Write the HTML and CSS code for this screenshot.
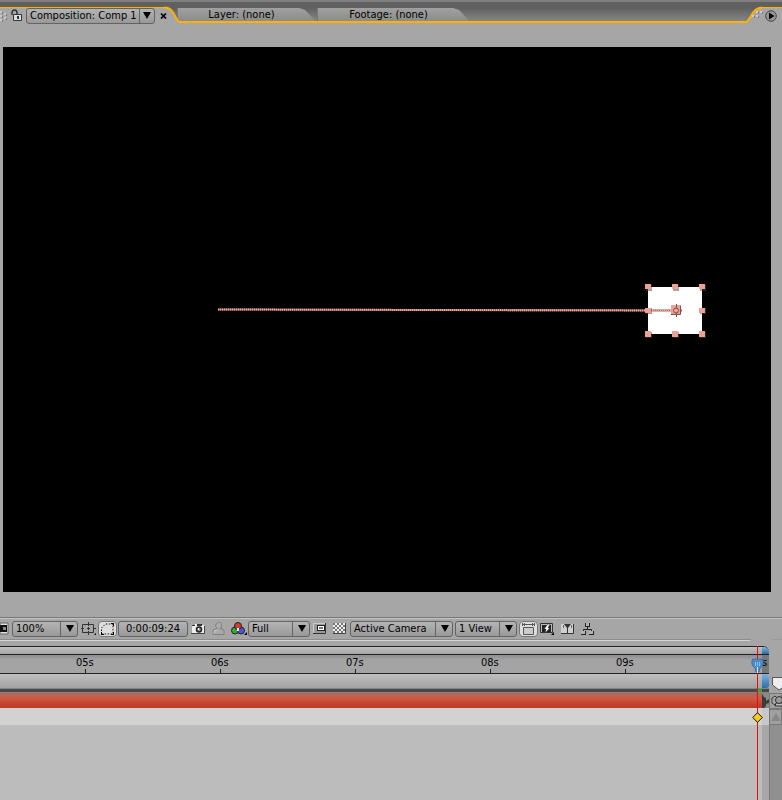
FILE: index.html
```
<!DOCTYPE html>
<html lang="en">
<head>
    <meta charset="utf-8">
    <title>Composition: Comp 1</title>
    <link rel="stylesheet" href="styles.css">
</head>
<body>
    <section class="comp">
        <header class="tabs">
            <div class="tab-active">
                <svg class="grip" width="9" height="14" viewBox="0 0 9 14">
                    <path d="M0 2h2v2H0zM4 4h2v2H4zM0 6h2v2H0zM4 8h2v2H4zM0 10h2v2H0z" fill="#ccc"/>
                    <path d="M2 3h1v2H2zM6 5h1v2H6zM2 7h1v2H2zM6 9h1v2H6zM2 11h1v2H2z" fill="#777"/>
                </svg>
                <button class="plain" aria-label="Lock">
                    <svg width="12" height="13" viewBox="0 0 12 13">
                        <path d="M1 6V4q0-3 2.500-3T6 4v2" fill="none" stroke="#333" stroke-width="1.500"/>
                        <path d="M2.500 5.500h8v6h-8z" fill="#ddd" stroke="#333"/>
                        <path d="M6 7h2v3H6z" fill="#333"/>
                    </svg>
                </button>
                <span class="drop drop-comp">
                    <select aria-label="Composition"><option>Composition: Comp 1</option></select>
                </span>
                <button class="plain close" aria-label="Close">
                    <svg width="7" height="6" viewBox="0 0 7 6"><path d="M1 0.500l5 5M6 0.500l-5 5" stroke="#000" stroke-width="1.700"/></svg>
                </button>
            </div>
            <svg class="edge" width="10" height="16" viewBox="0 0 10 16">
                <path d="M0 0q4 1 6 5l4 7q1 3 4 3v1H0z" fill="#a6a6a6"/>
                <path d="M-3 .500q6 0 9 5l4 7q1 2.500 4 2.500" fill="none" stroke="#ffb300" stroke-width="2"/>
            </svg>
            <div class="tab-rest">
                <button class="tab">Layer: (none)</button>
                <button class="tab tab-last">Footage: (none)</button>
            </div>
            <svg class="edge" width="15" height="16" viewBox="0 0 15 16">
                <path d="M15 0q-6 0-9 5l-4 8q-1 2-2 2v1h15z" fill="#a6a6a6"/>
                <path d="M0 15l4-6q4-8 11-8.500" fill="none" stroke="#ffb300" stroke-width="2"/>
            </svg>
            <div class="tab-menu">
                <svg class="grip-end" width="11" height="14" viewBox="0 0 11 14">
                    <path d="M4 2h2v2H4zM8 2h2v2H8zM0 6h2v2H0zM4 6h2v2H4z" fill="#ccc"/>
                    <path d="M6 3h1v2H6zM10 3h1v2h-1zM2 7h1v2H2zM6 7h1v2H6z" fill="#777"/>
                </svg>
                <button class="plain" aria-label="Panel menu">
                    <svg width="12" height="12" viewBox="0 0 12 12">
                        <circle cx="6" cy="6" r="5.300" fill="#999" stroke="#444"/>
                        <path d="M4 2.500L9.500 6 4 9.500z" fill="#000"/>
                    </svg>
                </button>
            </div>
        </header>

        <div class="viewer">
            <svg class="stage" viewBox="0 0 768 545">
                <rect width="768" height="545" fill="#000"/>
                <rect x="645" y="240" width="54" height="47" fill="#fff"/>
                <path d="M215 262.500L679 263.500" stroke="#a87168" stroke-width="2"/>
                <path d="M215 262.500L679 263.500" stroke="#f0a79b" stroke-width="2" stroke-dasharray="1 1"/>
                <path d="M643 238h6v6h-6zM670 238h6v6h-6zM697 238h6v6h-6zM643 261h6v6h-6zM697 261h6v6h-6zM643 285h6v6h-6zM670 285h6v6h-6zM697 285h6v6h-6z" fill="#5c4440" opacity=".5"/>
                <path d="M642 237h6v5h-6zM669 237h6v5h-6zM696 237h6v5h-6zM642 261h6v5h-6zM696 261h6v5h-6zM642 284h6v6h-6zM669 284h6v6h-6zM696 284h6v6h-6zM668 258h9v9h-9z" fill="#eda094"/>
                <g fill="none" stroke="#80504a">
                    <circle cx="673" cy="263.500" r="2.500"/>
                    <path d="M673.500 257v4M673.500 266v4M677 263.500h2M668 267.500h9.500v-9"/>
                </g>
            </svg>
        </div>

        <footer class="toolbar">
            <button class="plain icon-first" aria-label="Always preview this view">
                <svg width="9" height="13" viewBox="0 0 9 13">
                    <path d="M0 1h8v11H0z" fill="#ddd" stroke="#666"/>
                    <path d="M0 3h7v7H0z" fill="#111"/><path d="M3 5h3v3H3z" fill="#888"/>
                </svg>
            </button>
            <span class="drop drop-zoom"><select aria-label="Magnification"><option>100%</option></select></span>
            <button class="plain icon" aria-label="Safe zones">
                <svg width="15" height="13" viewBox="0 0 15 13">
                    <path d="M1.500 2.500h11v8h-11zM7.500 0v4M7.500 9v4M0 6.500h3M12 6.500h3M6 6.500h3M7.500 5v3" fill="none" stroke="#333"/>
                    <path d="M15 11v2h-2z"/>
                </svg>
            </button>
            <button class="toggle" aria-label="Mask visibility">
                <svg width="13" height="12" viewBox="0 0 13 12">
                    <path d="M.500 11V5l4-4H12v10z" fill="none" stroke="#111" stroke-dasharray="1.500 1.500"/>
                    <path d="M0 9h1v2h2v1H0zM12 9h1v3h-3v-1h2zM10 0h3v3h-1V1h-2z"/>
                </svg>
            </button>
            <button class="timecode">0:00:09:24</button>
            <button class="plain icon icon-camera" aria-label="Take snapshot">
                <svg width="15" height="12" viewBox="0 0 15 12">
                    <path d="M1 2h3V1h2v1h7v8H1z" fill="#ececec"/>
                    <path d="M6 1h5v2H6zM1 2h3v1H1z" fill="#333"/>
                    <path d="M0 10.500h13.500V3" fill="none" stroke="#444"/>
                    <circle cx="8" cy="6.500" r="2.500" fill="#999" stroke="#222" stroke-width="1.500"/>
                    <path d="M7 5h1v2H7z" fill="#fff"/>
                </svg>
            </button>
            <button class="plain icon icon-person" aria-label="Show last snapshot">
                <svg width="13" height="13" viewBox="0 0 13 13">
                    <path d="M1 12.500V9q0-2 3-2h1V6Q3.500 5 3.500 3.500t3-3 3 3T8 6v1h1q3 0 3 2v3.500z" fill="#aaa" stroke="#808080"/>
                    <path d="M2 11q0-3 3-3" fill="none" stroke="#ccc"/>
                </svg>
            </button>
            <button class="plain icon icon-rgb" aria-label="Show channel">
                <svg width="16" height="13" viewBox="0 0 16 13">
                    <g stroke="#222"><circle cx="4" cy="8.500" r="3.500" fill="#2fae34"/><circle cx="10" cy="8.500" r="3.500" fill="#4a55d8"/><circle cx="7" cy="4" r="3.500" fill="#d63b2e"/></g>
                    <path d="M6 6h2v3H6z" fill="#eee"/><path d="M16 10v3h-3z"/>
                </svg>
            </button>
            <span class="drop drop-res"><select aria-label="Resolution"><option>Full</option></select></span>
            <button class="plain icon" aria-label="Region of interest">
                <svg width="13" height="11" viewBox="0 0 13 11">
                    <path d="M.500.500h12v10H.500z" fill="#999" stroke="#ccc"/><path d="M0 10.500h12.500V0" fill="none" stroke="#333"/>
                    <path d="M4 2h8v6H4z" fill="#222"/><path d="M5 3h6v4H5z" fill="#fff"/><path d="M6 4h4v2H6z" fill="#777"/>
                </svg>
            </button>
            <button class="plain icon icon-grid" aria-label="Transparency grid">
                <svg width="13" height="11" viewBox="0 0 13 11">
                    <path d="M0 0h12v10H0z" fill="#eee"/>
                    <path d="M0 1h12M0 5h12M0 9h12" stroke="#777" stroke-width="2" stroke-dasharray="2 2"/>
                    <path d="M2 3h10M2 7h10" stroke="#777" stroke-width="2" stroke-dasharray="2 2"/>
                    <path d="M0 10.500h12.500V0" fill="none" stroke="#444"/>
                </svg>
            </button>
            <span class="drop drop-camera"><select aria-label="3D view"><option>Active Camera</option></select></span>
            <span class="drop drop-view"><select aria-label="View layout"><option>1 View</option></select></span>
            <button class="toggle toggle-aspect" aria-label="Pixel aspect ratio correction">
                <svg width="13" height="12" viewBox="0 0 13 12">
                    <path d="M1 1.500h11M.500 0v3M12.500 0v3M2.500 0v3M10.500 0v3" stroke="#555"/>
                    <path d="M1.500 4.500h10v7h-10z" fill="#ccc" stroke="#555"/>
                </svg>
            </button>
            <button class="plain icon icon-fast" aria-label="Fast previews">
                <svg width="14" height="12" viewBox="0 0 14 12">
                    <path d="M.500.500h12v9H.500z" fill="#bbb" stroke="#333"/><path d="M2 2h9v7H2z" fill="#222"/>
                    <path d="M8 1L4 6h2l-1 4 5-5H8l2-4z" fill="#fff" stroke="#222" stroke-width=".500"/><path d="M14 9v3h-3z"/>
                </svg>
            </button>
            <button class="plain icon icon-timeline" aria-label="Timeline">
                <svg width="13" height="11" viewBox="0 0 13 11">
                    <path d="M0 1h12v9H0z" fill="#d0d0d0"/><path d="M0 10.500h12.500V1" fill="none" stroke="#333"/>
                    <path d="M2.500 2v3M10.500 2v3" stroke="#666"/>
                    <path d="M3 1h7L7 5v5H6V5z" fill="#333"/>
                </svg>
            </button>
            <button class="plain icon icon-flow" aria-label="Comp flowchart">
                <svg width="14" height="12" viewBox="0 0 14 12">
                    <path d="M6.500 4v3M2.500 9V6.500h8V9" fill="none" stroke="#222"/>
                    <path d="M4 0h5v4H4zM0 8h5v4H0zM8 8h5v4H8z" fill="#222"/>
                    <path d="M5 0h3v3H5zM0 8h4v3H0zM8 8h4v3H8z" fill="#b4b4b4"/>
                </svg>
            </button>
        </footer>
    </section>

    <section class="timeline">
        <div class="divider"><span class="divider-line"></span><span class="divider-dot"></span></div>
        <div class="body">
            <div class="tracks">
                <div class="navigator"><span class="nav-end"></span></div>
                <div class="ruler">
                    <span class="tick">05s</span>
                    <span class="tick">06s</span>
                    <span class="tick">07s</span>
                    <span class="tick">08s</span>
                    <span class="tick">09s</span>
                    <span class="ruler-end">s</span>
                </div>
                <div class="workarea"><span class="work-end"></span></div>
                <div class="cache"><span class="cached"></span></div>
                <div class="layer">
                    <svg width="7" height="15" viewBox="0 0 7 15"><path d="M0 1l2 3 2 1v3l3-2v4l-3 1v2l-2 2H0z" fill="#3b3b3b"/></svg>
                </div>
                <div class="property"></div>
                <div class="empty"></div>
                <div class="playhead">
                    <svg width="13" height="15" viewBox="0 0 13 15">
                        <path d="M1 2l1-1h9l1 1v4q0 2-3 4l-1 4H5l-1-4Q1 8 1 6z" fill="#4d8cc6" stroke="#3a70a6"/>
                        <path d="M4.500 4v4M6.500 4v4M8.500 4v4" stroke="#8abbe4"/><path d="M6.500 9v6" stroke="#d8e6f2"/>
                    </svg>
                </div>
                <svg class="keyframe" width="11" height="11" viewBox="0 0 11 11"><path d="M5.500 .700l4.800 4.800-4.800 4.800L.700 5.500z" fill="#f5cf13" stroke="#111"/></svg>
            </div>
            <div class="side">
                <button class="plain marker" aria-label="Comp marker">
                    <svg width="11" height="14" viewBox="0 0 11 14"><path d="M.500.500H13V9l-6 4-6.500-5z" fill="#eee" stroke="#555"/></svg>
                </button>
                <button class="plain side-comp" aria-label="Comp button">
                    <svg width="12" height="14" viewBox="0 0 12 14">
                        <path d="M1 4l3-2 2 2M1 4v5l3 2M5 9h7v3H4z" fill="#bbb" stroke="#333"/><circle cx="8" cy="6" r="3.500" fill="#999" stroke="#333"/>
                    </svg>
                </button>
                <button class="plain side-up" aria-label="Scroll up">
                    <svg width="10" height="8" viewBox="0 0 10 8"><path d="M5 0l5 8H0z" fill="#888"/></svg>
                </button>
                <div class="side-scroll"></div>
            </div>
        </div>
    </section>
</body>
</html>
```

FILE: styles.css
```
* {
    box-sizing: border-box;
}
body {
    margin: 0;
    min-height: 100vh;
    display: flex;
    flex-direction: column;
    background-color: #a6a6a6;
    color: #000;
    font-family: "DejaVu Sans Condensed", "DejaVu Sans", sans-serif;
    font-size: 11px;
    overflow: hidden;
}
svg {
    display: block;
    flex: none;
}
button, select {
    font: inherit;
    color: inherit;
    margin: 0;
}
.plain {
    padding: 0;
    border: 0;
    background: none;
    flex: none;
}

/* Panel tabs */
.tabs {
    display: flex;
    height: 23px;
    padding-top: 7px;
    background: linear-gradient(#7f7f7f 2px, #606060 2px, #606060 8px, #898989 22px);
}
.tab-active {
    display: flex;
    align-items: center;
    width: 167px;
    flex: none;
    border-top: 1px solid #ffb300;
    background-color: #a6a6a6;
}
.tab-active .drop {
    margin-left: 3px;
}
.grip {
    margin-right: 2px;
}
.close {
    margin-left: 5px;
}
.edge {
    overflow: visible;
    z-index: 1;
}
.tab-rest {
    display: flex;
    flex: 1;
    padding-top: 1px;
    border-bottom: 2px solid #ffb300;
}
.tab {
    width: 140px;
    padding: 0 12px 0 0;
    border: 0;
    border-left: 1px solid #777;
    background: linear-gradient(#a0a0a0, #8c8c8c);
    clip-path: polygon(0 0, 122px 0, 128px 2px, 132px 6px, 138px 100%, 0 100%);
    line-height: 12px;
}
.tab-last {
    width: 154px;
    clip-path: polygon(0 0, 136px 0, 142px 2px, 146px 6px, 152px 100%, 0 100%);
}
.tab-menu {
    display: flex;
    justify-content: flex-end;
    align-items: center;
    gap: 2px;
    width: 20px;
    padding-right: 5px;
    border-top: 1px solid #ffb300;
    background-color: #a6a6a6;
    z-index: 2;
}

/* Drop-downs */
.drop {
    display: grid;
    flex: none;
    height: 16px;
    border: 1px solid #636363;
    border-radius: 3px;
    background: linear-gradient(#b4b4b4, #999);
}
.drop select {
    grid-area: 1 / 1;
    appearance: none;
    width: 100%;
    padding: 0 14px 0 3px;
    border: 0;
    background: none;
    line-height: 14px;
}
.drop::before {
    content: "";
    grid-area: 1 / 1;
    justify-self: end;
    width: 14px;
    border-left: 1px solid #636363;
    pointer-events: none;
}
.drop::after {
    content: "";
    grid-area: 1 / 1;
    place-self: center end;
    width: 8px;
    height: 7px;
    margin-right: 3px;
    background-color: #000;
    clip-path: polygon(0 0, 100% 0, 50% 100%);
    pointer-events: none;
}
.drop-comp {
    width: 129px;
}
.drop-zoom {
    width: 66px;
}
.drop-res {
    width: 62px;
}
.drop-camera {
    width: 103px;
}
.drop-view {
    width: 62px;
}

/* Composition view */
.viewer {
    padding: 24px 11px 25px 3px;
}
.stage {
    width: 100%;
}

/* Bottom toolbar */
.toolbar {
    display: flex;
    align-items: center;
    gap: 3px;
    height: 22px;
    border-top: 1px solid #777;
    box-shadow: inset 0 1px #c4c4c4;
}
.toolbar .drop::before {
    width: 16px;
}
.toggle {
    display: flex;
    align-items: center;
    justify-content: center;
    width: 19px;
    height: 16px;
    padding: 0;
    border: 1px solid #777;
    border-radius: 4px;
    background-color: #dedede;
    flex: none;
}
.icon + .toggle {
    margin-left: -1px;
}
.timecode {
    width: 70px;
    height: 16px;
    margin-left: -2px;
    padding: 0;
    border: 1px solid #636363;
    border-radius: 3px;
    background: linear-gradient(#b4b4b4, #999);
    line-height: 14px;
    flex: none;
}
.icon-person {
    margin-left: 3px;
}
.icon-rgb {
    margin-left: 3px;
    margin-right: -2px;
}
.icon-grid {
    margin: 0 1px 0 4px;
}
.drop-view, .toggle-aspect, .icon-fast {
    margin-left: -1px;
}
.icon-timeline, .icon-flow {
    margin-left: 4px;
}

/* Timeline */
.timeline {
    display: flex;
    flex: 1;
    flex-direction: column;
}
.divider {
    display: flex;
    height: 7px;
    gap: 21px;
}
.divider-line {
    flex: 1;
    height: 2px;
    border-top: 1px solid #8c8c8c;
    border-bottom: 1px solid #d4d4d4;
    border-bottom-right-radius: 2px;
}
.divider-dot {
    width: 10px;
    height: 1px;
    background-color: #999;
}
.body {
    display: flex;
    flex: 1;
}
.tracks {
    position: relative;
    display: flex;
    flex: 1;
    flex-direction: column;
}
.navigator {
    height: 9px;
    border: solid #222;
    border-width: 1px 0;
    border-top-right-radius: 6px;
    background: linear-gradient(#c2c2c2, #a4a4a4);
    overflow: hidden;
}
.nav-end, .work-end {
    display: block;
    width: 7px;
    height: 100%;
    margin-left: auto;
    background: linear-gradient(#7eb3e2, #2f6da8);
}
.ruler {
    display: flex;
    justify-content: flex-end;
    height: 19px;
    border-bottom: 1px solid #222;
    background: linear-gradient(#8f8b8f, #a4a4a4 5px);
}
.tick {
    display: flex;
    flex-direction: column;
    justify-content: space-between;
    width: 135px;
    padding-top: 2px;
    line-height: 12px;
}
.tick::after {
    content: "";
    width: 1px;
    height: 4px;
    margin-left: 9px;
    background-color: #222;
}
.tick:nth-last-child(2) {
    width: 146px;
}
.ruler-end {
    width: 7px;
    padding-top: 2px;
    background-color: #777;
    line-height: 12px;
}
.workarea {
    height: 14px;
    background: linear-gradient(#bfbfbf, #a3a3a3);
}
.work-end {
    border-radius: 0 3px 3px 0;
}
.cache {
    display: flex;
    justify-content: flex-end;
    height: 5px;
    padding-right: 7px;
    border: solid #858585;
    border-width: 1px 0;
    background-color: #484848;
}
.cached {
    width: 5px;
    background-color: #2bab2b;
}
.layer {
    display: flex;
    justify-content: flex-end;
    height: 15px;
    background: linear-gradient(to left, #8a8a8a 7px, transparent 7px), linear-gradient(#ad6a5e, #cf5a45 5px, #bd3d27 13px);
}
.property {
    height: 17px;
    border-right: 7px solid #c8c8c8;
    background-color: #d2d2d2;
}
.empty {
    flex: 1;
    border-right: 7px solid #a8a8a8;
    background-color: #bcbcbc;
}
/* The current time indicator lies over every row */
.playhead {
    position: absolute;
    top: 0;
    bottom: 0;
    right: 11px;
    width: 1px;
    background-color: #e01010;
}
.playhead svg {
    margin: 12px 0 0 -6px;
}
.keyframe {
    position: absolute;
    top: 66px;
    right: 6px;
}

/* Right column */
.side {
    display: flex;
    flex-direction: column;
    width: 13px;
    padding-top: 29px;
    overflow: hidden;
}
.marker {
    height: 18px;
    padding-left: 3px;
}
.side-comp, .side-up {
    height: 16px;
    padding-left: 1px;
    border: 1px solid #777;
    background-color: #a0a0a0;
}
.side-scroll {
    flex: 1;
    border-left: 1px solid #777;
    background-color: #909090;
}
```
